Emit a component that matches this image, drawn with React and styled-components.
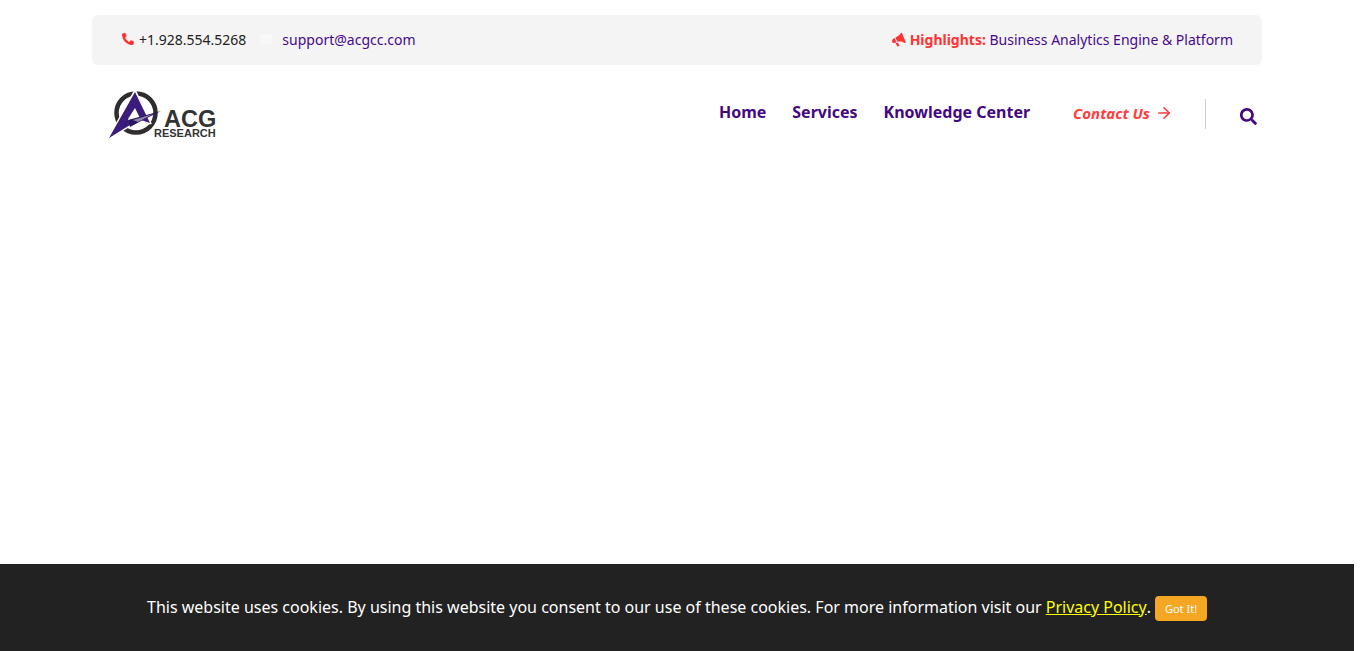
import React from "react";
import styled, { createGlobalStyle } from "styled-components";
import { FaPhoneAlt, FaSearch, FaEnvelope } from "react-icons/fa";
import { FiArrowRight } from "react-icons/fi";

const GlobalStyle = createGlobalStyle`
html, body {
  margin: 0;
  padding: 0;
  background: #fff;
  overflow: hidden;
}
body {
  font-family: "Noto Sans", "Open Sans", sans-serif;
}
`;

const Page = styled.div`
  width: 1354px;
  height: 651px;
  display: flex;
  flex-direction: column;
  justify-content: space-between;
`;

const Wrapper = styled.div`
  width: 1170px;
  margin: 15px auto 0;
`;

const TopBar = styled.div`
  height: 48px;
  padding: 0 29px 2px 30px;
  background: #f4f4f4;
  border-radius: 6px;
  display: flex;
  align-items: center;
  justify-content: space-between;
  font-size: 14px;
`;

const TopGroup = styled.div`
  display: flex;
  align-items: center;
`;

const Phone = styled.span`
  color: #222;
  display: flex;
  align-items: center;
  gap: 5px;
  svg { color: #ff3333; font-size: 12px; }
`;

const Mail = styled.a`
  color: #47098a;
  text-decoration: none;
  display: flex;
  align-items: center;
  margin-left: 14px;
  gap: 10px;
  svg { color: #f9f9f9; font-size: 12px; }
`;

const Highlight = styled.span`
  color: #47098a;
  display: flex;
  align-items: center;
  gap: 3px;
  svg { color: #ff3333; }
  b { color: #ff3333; font-weight: 700; }
`;

const Header = styled.div`
  display: flex;
  align-items: flex-start;
  justify-content: space-between;
  padding: 24px 5px 0 17px;
`;

const Nav = styled.nav`
  display: flex;
  align-items: center;
  height: 50px;
`;

const NavMenu = styled.div`
  display: flex;
  gap: 26px;
  margin-right: 43px;
  margin-top: -5px;
`;

const NavLink = styled.a`
  color: #44087f;
  font-size: 16px;
  font-weight: 700;
`;

const Contact = styled.a`
  color: #ff3d3d;
  font-size: 15px;
  font-weight: 700;
  font-style: italic;
  display: flex;
  align-items: center;
  gap: 5px;
  margin-top: -3px;
  svg { font-size: 18px; stroke-width: 2.2; }
`;

const Divider = styled.span`
  width: 1px;
  height: 30px;
  background: #cfcfd6;
  margin: 0 34px 0 32px;
`;

const SearchButton = styled.button`
  border: 0;
  padding: 0;
  background: none;
  color: #44087f;
  font-size: 17px;
  display: flex;
  margin-top: 5px;
  svg { display: block; }
`;

const CookieBar = styled.div`
  height: 87px;
  padding-bottom: 2px;
  box-sizing: border-box;
  background: #222;
  display: flex;
  align-items: center;
  justify-content: center;
  color: #fff;
  font-size: 16px;
`;

const PolicyLink = styled.a`
  color: #ffff00;
  text-decoration: underline;
  margin-left: 4px;
`;

const GotIt = styled.button`
  border: 0;
  background: #f5a623;
  color: #fff;
  font-family: "Noto Sans", sans-serif;
  font-size: 11px;
  border-radius: 4px;
  height: 25px;
  width: 52px;
  margin: 4px 0 0 4px;
  padding: 0;
`;

const Megaphone = () => (
  <svg width="15" height="15" viewBox="0 0 14 14" fill="currentColor">
    <path d="M9.2 0.6 L13 9.8 L11.9 10.3 C10 8.7 7.6 8.4 5 9.2 L3.2 5.2 C5.6 4.2 7.6 2.6 8.2 1 Z" />
    <path d="M2.5 5.6 L4.2 9.5 L2.2 10.3 C1 10.6 0.3 9.8 0.2 8.8 C0 7.8 0.4 6.8 1.2 6.2 Z" />
    <path d="M3.4 10.4 L5.6 9.7 L7 12.8 L5 13.6 Z" />
  </svg>
);

const Logo = () => (
  <svg width="108" height="50" viewBox="0 0 108 50">
    <circle cx="27" cy="24" r="19.5" fill="none" stroke="#2f2d2e" strokeWidth="4.5" />
    <path d="M26 2 L0 49 L20 37 L41 34 Z" fill="#fff" stroke="#fff" strokeWidth="2.5" />
    <path d="M26 3 L0 49 L21 36 L19 30 L26 19 L32 31 L41 34 Z" fill="#3b1c7a" />
    <path d="M19 31 L52 22 L34 31 L21 38 Z" fill="#2c1660" />
    <path d="M24 31 L44 25 L29 33 Z" fill="#8f86a8" />
    <text x="55" y="37.5" fontFamily="Liberation Sans, sans-serif" fontWeight="700" fontSize="23.5" fill="#333">ACG</text>
    <text x="45" y="48" fontFamily="Liberation Sans, sans-serif" fontWeight="700" fontSize="11" fill="#333">RESEARCH</text>
  </svg>
);

export default function App() {
  return (
    <Page>
      <GlobalStyle />
      <Wrapper>
        <TopBar>
          <TopGroup>
            <Phone><FaPhoneAlt style={{ transform: "scaleX(-1) rotate(-90deg)" }} />+1.928.554.5268</Phone>
            <Mail href="#"><FaEnvelope />support@acgcc.com</Mail>
          </TopGroup>
          <Highlight>
            <Megaphone />
            <span><b>Highlights:</b> Business Analytics Engine &amp; Platform</span>
          </Highlight>
        </TopBar>
        <Header>
          <Logo />
          <Nav>
            <NavMenu>
              <NavLink>Home</NavLink>
              <NavLink>Services</NavLink>
              <NavLink>Knowledge Center</NavLink>
            </NavMenu>
            <Contact>Contact Us <FiArrowRight /></Contact>
            <Divider />
            <SearchButton><FaSearch /></SearchButton>
          </Nav>
        </Header>
      </Wrapper>
      <CookieBar>
        This website uses cookies. By using this website you consent to our use of these cookies. For more information visit our
        <PolicyLink>Privacy Policy</PolicyLink>.
        <GotIt>Got It!</GotIt>
      </CookieBar>
    </Page>
  );
}
